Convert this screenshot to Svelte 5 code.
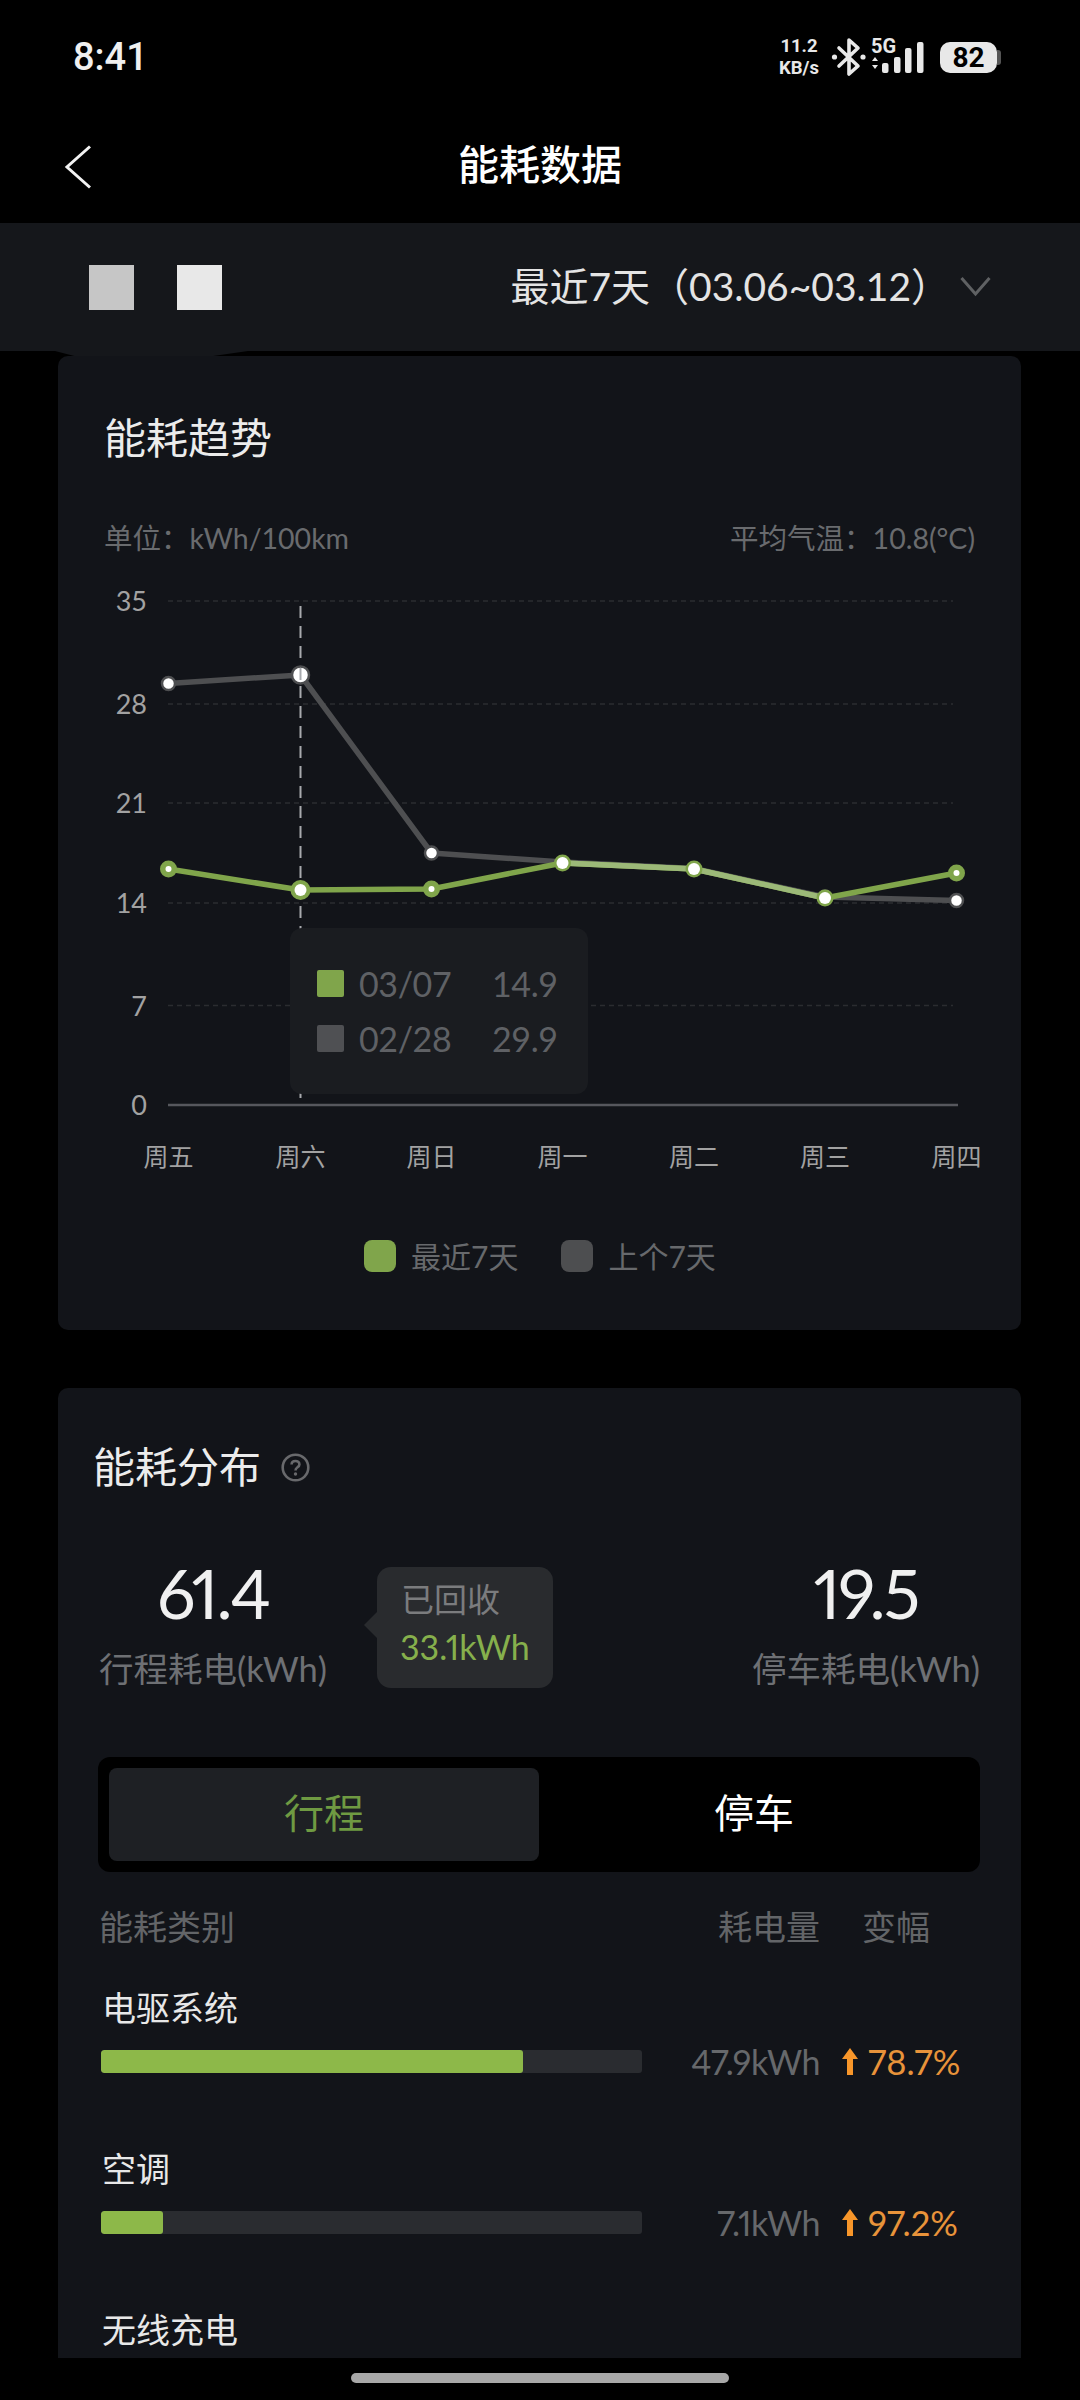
<script>
  const xs = [168.5, 300.5, 431.5, 562.5, 694, 825, 956.5];
  const gray = [683.5, 675, 853, 862, 868.5, 897, 900.5];
  const green = [869, 890, 889, 863, 869, 898, 873];
  const ticks = [
    { label: '35', y: 601 },
    { label: '28', y: 704 },
    { label: '21', y: 803 },
    { label: '14', y: 903 },
    { label: '7', y: 1005.5 },
    { label: '0', y: 1105 }
  ];
  const days = ['周五', '周六', '周日', '周一', '周二', '周三', '周四'];
  const pts = (a) => a.map((y, i) => `${xs[i]},${y}`).join(' ');
  const overlap = green.map((y, i) => `${xs[i]},${y}`).slice(3, 6).join(' ');
  const rows = [
    { name: '电驱系统', pct: 78, val: '47.9kWh', change: '78.7%' },
    { name: '空调', pct: 11.5, val: '7.1kWh', change: '97.2%' },
    { name: '无线充电' }
  ];
</script>

<div class="screen">
  <div class="status">
    <span class="time">8:41</span>
    <div class="sys">
      <div class="speed"><span>11.2</span><span>KB/s</span></div>
      <svg class="bt" width="36" height="40" viewBox="0 0 36 40">
        <path d="M8 11 L27 29 L18 37 V3 L27 11 L8 29" fill="none" stroke="#e8e8e8" stroke-width="3.6" stroke-linejoin="round" stroke-linecap="round" />
        <circle cx="3.5" cy="20" r="2.6" fill="#e8e8e8" />
        <circle cx="32" cy="20" r="2.6" fill="#e8e8e8" />
      </svg>
      <div class="net">
        <span class="g5">5G</span>
        <svg width="56" height="34" viewBox="0 0 56 34" class="bars">
          <path d="M3 19 L6 15 L9 19 Z M3 23 L9 23 L6 27 Z" fill="#e8e8e8" />
          <rect x="13" y="21" width="6.5" height="10" rx="2" fill="#e8e8e8" />
          <rect x="25" y="15" width="6.5" height="16" rx="2" fill="#e8e8e8" />
          <rect x="36" y="6" width="6.5" height="25" rx="2" fill="#e8e8e8" />
          <rect x="48" y="0" width="6.5" height="31" rx="2" fill="#e8e8e8" />
        </svg>
      </div>
      <div class="battery"><span>82</span></div>
    </div>
  </div>

  <div class="nav">
    <svg class="back" width="28" height="44" viewBox="0 0 28 44">
      <path d="M26 1.5 L3 22 L26 42.5" fill="none" stroke="#f2f2f2" stroke-width="3" />
    </svg>
    <span class="nav-title">能耗数据</span>
  </div>

  <div class="filter">
    <div class="squares">
      <span class="sq a"></span>
      <span class="sq b"></span>
    </div>
    <div class="range">
      <span class="range-text">最近7天（03.06~03.12）</span>
      <svg width="31" height="21" viewBox="0 0 31 21">
        <path d="M1.5 2 L15.5 18 L29.5 2" fill="none" stroke="#5f6163" stroke-width="3" />
      </svg>
    </div>
  </div>

  <main class="main">
    <section class="card trend">
      <h2 class="card-title">能耗趋势</h2>
      <div class="meta">
        <span>单位：kWh/100km</span>
        <span>平均气温：10.8(°C)</span>
      </div>
      <div class="chart">
        <svg width="963" height="640" viewBox="58 558 963 640">
          {#each ticks as t, i}
            <text class="tick" x="147" y={t.y + 10}>{t.label}</text>
            {#if i < 5}
              <line x1="168" x2="953" y1={t.y} y2={t.y} class="grid" />
            {/if}
          {/each}
          <line x1="168" x2="958" y1="1105" y2="1105" class="base" />
          <line x1="300.5" x2="300.5" y1="606" y2="1105" class="cursor" />
          <polyline points={pts(gray)} class="line gray" />
          <polyline points={pts(green)} class="line green" />
          <polyline points={overlap} class="line over" />
          {#each xs as x, i}
            {#if i !== 3 && i !== 4}
              <circle cx={x} cy={gray[i]} r={i === 1 ? 8.5 : 6.5} class="dot-gray" />
            {/if}
          {/each}
          {#each xs as x, i}
            <circle cx={x} cy={green[i]} r={i === 1 ? 10 : 8.5} fill="#80a54b" />
            <circle cx={x} cy={green[i]} r={i === 1 ? 6 : i >= 3 && i <= 5 ? 6 : 3} fill="#fff" />
          {/each}
          <line x1="300.5" x2="300.5" y1="668" y2="683" class="cursor" />
          {#each days as d, i}
            <text class="day" x={xs[i]} y="1166">{d}</text>
          {/each}
        </svg>
        <div class="tip">
          <div class="tip-row"><i class="swatch g"></i><span class="date">03/07</span><span class="num">14.9</span></div>
          <div class="tip-row"><i class="swatch k"></i><span class="date">02/28</span><span class="num">29.9</span></div>
        </div>
      </div>
      <div class="legend">
        <i class="key g"></i><span>最近7天</span>
        <i class="key k"></i><span>上个7天</span>
      </div>
    </section>

    <section class="card dist">
      <div class="dist-head">
        <h2 class="card-title">能耗分布</h2>
        <svg width="29" height="29" viewBox="0 0 29 29">
          <circle cx="14.5" cy="14.5" r="12.8" fill="none" stroke="#68696c" stroke-width="2.6" />
          <path d="M10.6 11.6 C10.6 6.8 18.4 6.8 18.4 11.4 C18.4 14.4 14.5 14.2 14.5 17.4" fill="none" stroke="#68696c" stroke-width="2.6" />
          <circle cx="14.5" cy="21" r="1.7" fill="#68696c" />
        </svg>
      </div>
      <div class="stats">
        <div class="stat">
          <div class="big">61.4</div>
          <div class="cap">行程耗电(kWh)</div>
        </div>
        <div class="stat">
          <div class="big">19.5</div>
          <div class="cap">停车耗电(kWh)</div>
        </div>
        <div class="bubble">
          <div class="b1">已回收</div>
          <div class="b2">33.1kWh</div>
        </div>
      </div>
      <div class="tabs">
        <div class="tab on"><span>行程</span></div>
        <div class="tab"><span>停车</span></div>
      </div>
      <div class="thead">
        <span class="th-first">能耗类别</span>
        <span class="th-val">耗电量</span>
        <span class="th-chg">变幅</span>
      </div>
      {#each rows as r}
        <div class="row">
          <div class="row-name">{r.name}</div>
          {#if r.val}
            <div class="barline">
              <div class="track"><div class="fill" style="width:{r.pct}%"></div></div>
              <div class="val">{r.val}</div>
              <svg class="up" width="16" height="27" viewBox="0 0 16 27">
                <path d="M8 0 L16 11 H11 V27 H5 V11 H0 Z" fill="#f7962a" />
              </svg>
              <div class="chg">{r.change}</div>
            </div>
          {/if}
        </div>
      {/each}
    </section>
  </main>

  <div class="home"><span></span></div>
</div>

<style>
  :global(body) {
    margin: 0;
    background: #000;
  }
  .screen {
    width: 1080px;
    height: 2400px;
    background: #000;
    display: flex;
    flex-direction: column;
    overflow: hidden;
    font-family: Lato, "Noto Sans CJK SC", sans-serif;
    color: #e8e8e8;
  }
  .status {
    height: 106px;
    padding: 8px 83px 0 73px;
    box-sizing: border-box;
    display: flex;
    align-items: center;
    justify-content: space-between;
    flex: none;
  }
  .time {
    font-family: Roboto, sans-serif;
    font-size: 38px;
    font-weight: 500;
    color: #f0f0f0;
  }
  .sys {
    display: flex;
    align-items: center;
    font-family: Roboto, sans-serif;
  }
  .speed {
    display: flex;
    flex-direction: column;
    align-items: center;
    font-size: 18.5px;
    font-weight: 700;
    line-height: 22px;
    width: 44px;
    color: #e8e8e8;
  }
  .bt {
    margin-left: 10px;
  }
  .net {
    position: relative;
    width: 56px;
    height: 36px;
    margin-left: 2px;
  }
  .g5 {
    position: absolute;
    left: 2px;
    top: -2px;
    font-size: 20px;
    font-weight: 700;
    line-height: 18px;
  }
  .bars {
    position: absolute;
    left: 0;
    top: 3px;
  }
  .battery {
    position: relative;
    width: 57px;
    height: 31px;
    margin-left: 15px;
    background: #e8e8e8;
    border-radius: 10px;
    color: #000;
    font-size: 28px;
    font-weight: 700;
    display: flex;
    align-items: center;
    justify-content: center;
  }
  .battery::after {
    content: "";
    position: absolute;
    right: -4px;
    top: 8px;
    width: 4px;
    height: 15px;
    background: #555;
    border-radius: 0 3px 3px 0;
  }
  .nav {
    height: 117px;
    flex: none;
    position: relative;
    display: flex;
    align-items: center;
    justify-content: center;
  }
  .back {
    position: absolute;
    left: 64px;
    top: 39px;
  }
  .nav-title {
    font-size: 41px;
    font-weight: 500;
    color: #fff;
    margin-top: -6px;
  }
  .filter {
    height: 128px;
    flex: none;
    background: #15171b;
    display: flex;
    align-items: center;
    justify-content: space-between;
    padding: 0 89px;
    box-sizing: border-box;
    position: relative;
  }
  .filter::after {
    content: "";
    position: absolute;
    left: 55px;
    top: 100%;
    width: 193px;
    height: 5px;
    background: #15171b;
    clip-path: polygon(0 0, 100% 0, 82% 100%, 10% 100%);
  }
  .squares {
    display: flex;
    gap: 43px;
  }
  .sq {
    width: 45px;
    height: 45px;
  }
  .sq.a {
    background: #c6c6c6;
  }
  .sq.b {
    background: #e8e8e8;
  }
  .range {
    display: flex;
    align-items: center;
    font-size: 39px;
    color: #e4e4e4;
  }
  .range-text {
    margin-top: -6px;
    margin-right: -22px;
  }
  .range svg {
    margin-left: 32px;
    margin-top: -2px;
  }
  .main {
    flex: 1;
    min-height: 0;
    overflow: hidden;
    padding: 5px 59px 0 58px;
  }
  .card {
    background: #121419;
    border-radius: 10px;
  }
  .trend {
    padding: 54px 0 58px;
  }
  .card-title {
    margin: 0;
    font-size: 42px;
    font-weight: 400;
    line-height: 56px;
    color: #ececec;
  }
  .trend > .card-title {
    padding-left: 46px;
  }
  .meta {
    margin-top: 52px;
    padding: 0 46px 0 46px;
    display: flex;
    justify-content: space-between;
    font-size: 28.5px;
    line-height: 40px;
    color: #696b6e;
  }
  .chart {
    position: relative;
    height: 640px;
  }
  .chart svg {
    display: block;
  }
  .tick {
    font-size: 27px;
    fill: #a2a2a2;
    text-anchor: end;
  }
  .day {
    font-size: 25px;
    fill: #a2a2a2;
    text-anchor: middle;
  }
  .grid {
    stroke: #2b2c30;
    stroke-width: 1.5;
    stroke-dasharray: 5 4;
  }
  .base {
    stroke: #56575d;
    stroke-width: 2.5;
  }
  .cursor {
    stroke: #a8aaae;
    stroke-width: 2;
    stroke-dasharray: 12 8;
  }
  .line {
    fill: none;
    stroke-width: 5.5;
    stroke-linejoin: round;
  }
  .line.gray {
    stroke: #4e4f51;
  }
  .line.green {
    stroke: #80a54b;
  }
  .line.over {
    stroke: #9cb978;
  }
  .dot-gray {
    fill: #fff;
    stroke: #4e4f51;
    stroke-width: 2.5;
  }
  .tip {
    position: absolute;
    left: 232px;
    top: 370px;
    width: 298px;
    height: 166px;
    box-sizing: border-box;
    padding: 28px 0 0 27px;
    background: #1a1c20;
    border-radius: 12px;
  }
  .tip-row {
    display: flex;
    align-items: center;
    height: 55px;
    font-size: 34px;
    color: #5f6165;
    letter-spacing: -0.4px;
  }
  .swatch {
    width: 27px;
    height: 27px;
    border-radius: 2px;
    flex: none;
  }
  .swatch.g {
    background: #80a54b;
  }
  .swatch.k {
    background: #4f5053;
  }
  .date {
    margin-left: 15px;
    width: 133px;
  }
  .legend {
    padding: 42px 0 0 306px;
    display: flex;
    align-items: center;
    font-size: 30px;
    line-height: 32px;
    color: #67696c;
  }
  .key {
    width: 32px;
    height: 32px;
    border-radius: 8px;
    margin-right: 15px;
    flex: none;
  }
  .key.g {
    background: #80a54b;
  }
  .key.k {
    background: #4d4e50;
    margin-left: 43px;
  }
  .dist {
    margin-top: 58px;
    padding: 51px 41px 0;
    height: 1400px;
    box-sizing: border-box;
  }
  .dist-head {
    display: flex;
    align-items: center;
    gap: 20px;
    margin-left: -6px;
  }
  .stats {
    position: relative;
    margin-top: 58px;
    display: flex;
    justify-content: space-between;
  }
  .stat {
    text-align: center;
  }
  .big {
    font-size: 68px;
    line-height: 80px;
    color: #f0f0f0;
    font-variant-numeric: proportional-nums;
    letter-spacing: -2px;
  }
  .cap {
    margin-top: 14px;
    font-size: 34.5px;
    line-height: 44px;
    color: #6e7074;
  }
  .bubble {
    position: absolute;
    left: 278px;
    top: 14px;
    width: 176px;
    height: 121px;
    box-sizing: border-box;
    padding: 10px 0 0 24px;
    background: #292b2e;
    border-radius: 14px;
  }
  .bubble::before {
    content: "";
    position: absolute;
    left: -13px;
    top: 45px;
    width: 13px;
    height: 26px;
    background: #292b2e;
    clip-path: polygon(100% 0, 0 50%, 100% 100%);
  }
  .b1 {
    font-size: 33px;
    line-height: 44px;
    color: #7b7c7e;
  }
  .b2 {
    margin-top: 4px;
    margin-left: -1px;
    font-size: 34px;
    line-height: 44px;
    color: #86b04c;
    font-variant-numeric: proportional-nums;
  }
  .tabs {
    margin: 66px 0 0 -1px;
    height: 115px;
    padding: 11px;
    box-sizing: border-box;
    background: #000;
    border-radius: 12px;
    display: flex;
  }
  .tab {
    flex: 1;
    display: flex;
    align-items: center;
    justify-content: center;
    font-size: 40px;
    color: #fff;
    border-radius: 8px;
  }
  .tab span {
    margin-top: -7px;
  }
  .tab.on {
    background: #1e2024;
    color: #6f9a42;
  }
  .thead {
    margin-top: 33px;
    padding-bottom: 2px;
    display: flex;
    font-size: 34px;
    line-height: 44px;
    color: #636568;
  }
  .th-val {
    margin-left: auto;
  }
  .th-chg {
    margin-left: 42px;
    margin-right: 50px;
    width: 68px;
  }
  .row {
    padding: 37px 0 0 2px;
  }
  .row + .row {
    padding-top: 76px;
  }
  .row-name {
    margin-left: 1px;
    padding-bottom: 4px;
    font-size: 34px;
    line-height: 40px;
    color: #e8e8e8;
  }
  .barline {
    margin-top: 18px;
    height: 23px;
    display: flex;
    align-items: center;
  }
  .track {
    width: 541px;
    height: 23px;
    flex: none;
    background: #2a2c30;
    border-radius: 3px;
    overflow: hidden;
  }
  .fill {
    height: 100%;
    background: #8db849;
    border-radius: 3px;
  }
  .val {
    width: 178px;
    flex: none;
    text-align: right;
    font-size: 34px;
    color: #66686b;
    font-variant-numeric: proportional-nums;
    letter-spacing: -0.5px;
  }
  .up {
    margin-left: 22px;
    flex: none;
  }
  .chg {
    margin-left: 10px;
    font-size: 34.5px;
    color: #e8933a;
    font-variant-numeric: proportional-nums;
  }
  .home {
    height: 42px;
    flex: none;
    background: #000;
    display: flex;
    justify-content: center;
    padding-top: 15px;
    box-sizing: border-box;
  }
  .home span {
    width: 378px;
    height: 10px;
    border-radius: 5px;
    background: #a8a8a8;
  }
</style>
